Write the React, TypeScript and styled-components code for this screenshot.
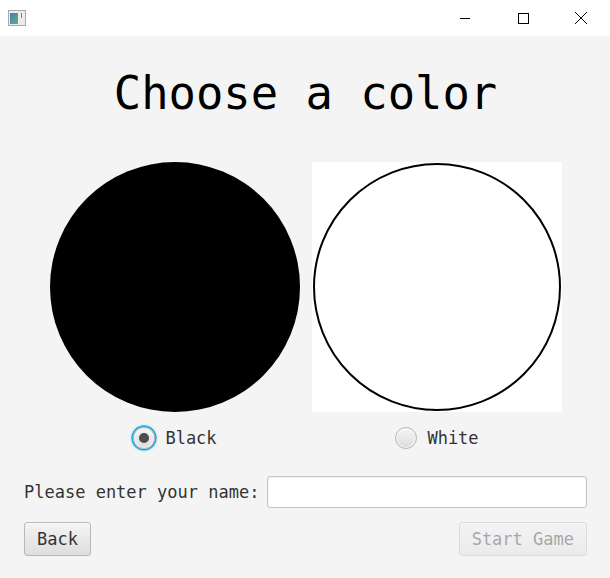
import React, { useState } from 'react';
import styled, { createGlobalStyle } from 'styled-components';

const GlobalStyle = createGlobalStyle`
  html, body {
    margin: 0;
    padding: 0;
    background: #f4f4f4;
  }
  * {
    box-sizing: border-box;
  }
`;

const Window = styled.div`
  width: 610px;
  height: 578px;
  display: flex;
  flex-direction: column;
  background: #f4f4f4;
  font-family: "DejaVu Sans Mono", "Liberation Mono", monospace;
  overflow: hidden;
`;

const TitleBar = styled.div`
  height: 36px;
  background: #ffffff;
  display: flex;
  align-items: center;
  padding-left: 8px;
`;

const TitleSpacer = styled.div`
  flex: 1;
`;

const CaptionButton = styled.div`
  width: 58px;
  height: 36px;
  display: flex;
  align-items: center;
  justify-content: center;
`;

const Content = styled.div`
  flex: 1;
  display: flex;
  flex-direction: column;
  padding: 30px 23px 0 24px;
`;

const Heading = styled.h1`
  margin: 0;
  height: 56px;
  line-height: 56px;
  text-align: center;
  font-size: 45.5px;
  font-weight: normal;
  color: #000000;
  padding-left: 0;
`;

const ChoiceRow = styled.div`
  display: flex;
  justify-content: center;
  gap: 12px;
  margin-top: 40px;
  padding-left: 1px;
`;

const Column = styled.div`
  width: 250px;
  display: flex;
  flex-direction: column;
  align-items: center;
`;

const Swatch = styled.div<{ $framed?: boolean }>`
  width: 250px;
  height: 250px;
  background: ${p => (p.$framed ? '#ffffff' : 'transparent')};
  display: flex;
  align-items: center;
  justify-content: center;
`;

const Disc = styled.div<{ $fill: string; $ring?: boolean }>`
  width: ${p => (p.$ring ? 248 : 250)}px;
  height: ${p => (p.$ring ? 248 : 250)}px;
  border-radius: 50%;
  background: ${p => p.$fill};
  border: ${p => (p.$ring ? '2px solid #000000' : 'none')};
`;

const RadioLabel = styled.label`
  margin-top: 14px;
  height: 24px;
  display: flex;
  align-items: center;
  gap: 10px;
  font-size: 17px;
  color: #333333;
  cursor: pointer;
`;

const RadioDot = styled.span<{ $checked: boolean; $focused?: boolean }>`
  width: 22px;
  height: 22px;
  border-radius: 50%;
  border: 1px solid #b5b5b5;
  background: linear-gradient(#f6f6f6, #dcdcdc);
  box-shadow: ${p =>
    p.$focused
      ? '0 0 0 1.5px #1aa7dc, 0 0 2px 2px rgba(3, 158, 211, 0.35), inset 0 0 0 1px #fafafa'
      : 'inset 0 0 0 1px #fafafa'};
  display: flex;
  align-items: center;
  justify-content: center;

  &::after {
    content: '';
    width: 10px;
    height: 10px;
    border-radius: 50%;
    background: ${p => (p.$checked ? 'radial-gradient(#555555, #3f3f3f)' : 'transparent')};
  }
`;

const NameRow = styled.div`
  margin-top: 26px;
  display: flex;
  align-items: center;
  gap: 8px;
`;

const NameLabel = styled.span`
  font-size: 17px;
  color: #333333;
  white-space: nowrap;
`;

const NameInput = styled.input`
  flex: 1;
  height: 32px;
  border: 1px solid #c4c4c4;
  border-radius: 3px;
  background: #ffffff;
  box-shadow: inset 0 1px 2px rgba(0, 0, 0, 0.08);
  outline: none;
  font-family: inherit;
  font-size: 17px;
  padding: 0 7px;
`;

const ButtonRow = styled.div`
  margin-top: 14px;
  display: flex;
  justify-content: space-between;
`;

const Button = styled.button`
  height: 34px;
  padding: 0 12px;
  border: 1px solid #b8b8b8;
  border-radius: 3px;
  background: linear-gradient(#f4f4f4, #dedede);
  box-shadow: inset 0 1px 0 #fbfbfb;
  font-family: inherit;
  font-size: 17px;
  color: #333333;

  &:disabled {
    opacity: 0.4;
  }
`;

const AppIcon = () => (
  <svg width="18" height="16" viewBox="0 0 18 16">
    <defs>
      <linearGradient id="ic" x1="0" y1="0" x2="1" y2="1">
        <stop offset="0" stopColor="#3b7fb6" />
        <stop offset="1" stopColor="#66b07a" />
      </linearGradient>
    </defs>
    <rect x="0.5" y="0.5" width="17" height="15" fill="#ececec" stroke="#a9a9a9" />
    <rect x="2" y="3" width="8" height="11" fill="url(#ic)" />
    <rect x="13" y="3" width="1" height="5" fill="#3c8fb5" />
  </svg>
);

const App: React.FC = () => {
  const [color, setColor] = useState<'black' | 'white'>('black');
  const [name, setName] = useState('');

  return (
    <Window>
      <GlobalStyle />
      <TitleBar>
        <AppIcon />
        <TitleSpacer />
        <CaptionButton>
          <svg width="12" height="12" viewBox="0 0 12 12">
            <path d="M1 6.5h10" stroke="#000" strokeWidth="1" />
          </svg>
        </CaptionButton>
        <CaptionButton>
          <svg width="12" height="12" viewBox="0 0 12 12">
            <rect x="1.5" y="1.5" width="10" height="10" fill="none" stroke="#000" strokeWidth="1" />
          </svg>
        </CaptionButton>
        <CaptionButton>
          <svg width="14" height="14" viewBox="0 0 14 14">
            <path d="M1 1l12 12M13 1L1 13" stroke="#000" strokeWidth="1" />
          </svg>
        </CaptionButton>
      </TitleBar>

      <Content>
        <Heading>Choose a color</Heading>

        <ChoiceRow>
          <Column>
            <Swatch>
              <Disc $fill="#000000" />
            </Swatch>
            <RadioLabel onClick={() => setColor('black')}>
              <RadioDot $checked={color === 'black'} $focused />
              Black
            </RadioLabel>
          </Column>
          <Column>
            <Swatch $framed>
              <Disc $fill="#ffffff" $ring />
            </Swatch>
            <RadioLabel onClick={() => setColor('white')}>
              <RadioDot $checked={color === 'white'} />
              White
            </RadioLabel>
          </Column>
        </ChoiceRow>

        <NameRow>
          <NameLabel>Please enter your name:</NameLabel>
          <NameInput value={name} onChange={e => setName(e.target.value)} />
        </NameRow>

        <ButtonRow>
          <Button>Back</Button>
          <Button disabled={name.trim() === ''}>Start Game</Button>
        </ButtonRow>
      </Content>
    </Window>
  );
};

export default App;
